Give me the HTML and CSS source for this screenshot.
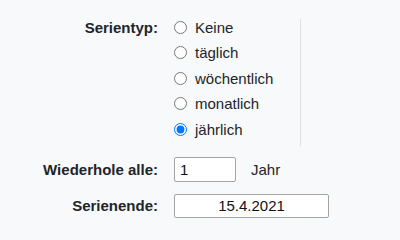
FILE: index.html
```html
<!DOCTYPE html>
<html lang="de">
<head>
<meta charset="utf-8">
<title>Serie</title>
<link rel="stylesheet" href="styles.css">
</head>
<body>
<form class="series">
  <div class="row row-type">
    <div class="label">Serientyp:</div>
    <div class="options">
      <label class="option"><input type="radio" name="typ" class="radio"><span>Keine</span></label>
      <label class="option"><input type="radio" name="typ" class="radio"><span>täglich</span></label>
      <label class="option"><input type="radio" name="typ" class="radio"><span>wöchentlich</span></label>
      <label class="option"><input type="radio" name="typ" class="radio"><span>monatlich</span></label>
      <label class="option"><input type="radio" name="typ" class="radio" checked><span>jährlich</span></label>
    </div>
  </div>
  <div class="row row-repeat">
    <div class="label">Wiederhole alle:</div>
    <div class="value">
      <input type="text" class="field field-small" value="1">
      <span class="unit">Jahr</span>
    </div>
  </div>
  <div class="row row-end">
    <div class="label">Serienende:</div>
    <div class="value">
      <input type="text" class="field field-date" value="15.4.2021">
    </div>
  </div>
</form>
</body>
</html>
```
FILE: styles.css
```css
html, body {
  margin: 0;
  padding: 0;
  background: #f8f9fa;
}
body {
  font-family: "Liberation Sans", Arial, sans-serif;
  font-size: 15px;
  color: #212529;
}
.series {
  display: flex;
  flex-direction: column;
  padding-top: 19px;
}
.row {
  display: grid;
  grid-template-columns: 158px auto;
  column-gap: 16px;
}
.label {
  text-align: right;
  font-weight: bold;
  line-height: 17px;
}
.row-type {
  align-items: start;
}
.options {
  display: flex;
  flex-direction: column;
  width: 126px;
  border-right: 1px solid #dee2e6;
}
.option {
  display: flex;
  align-items: center;
  height: 17px;
  padding-bottom: 8.4px;
  line-height: 17px;
}
.radio {
  margin: 0 8px 0 0;
  width: 13px;
  height: 13px;
  accent-color: #0075ff;
}
.row-repeat {
  margin-top: 11px;
  align-items: center;
}
.row-end {
  margin-top: 12px;
  align-items: center;
}
.value {
  display: flex;
  align-items: center;
}
.field {
  box-sizing: border-box;
  margin: 0;
  border: 1px solid #a4a4a4;
  border-radius: 2px;
  background: #fff;
  font-family: "Liberation Sans", Arial, sans-serif;
  font-size: 15px;
  color: #111;
  padding: 0 5px;
  outline: none;
}
.field-small {
  width: 62px;
  height: 25px;
}
.field-date {
  width: 155px;
  height: 24px;
  text-align: center;
}
.unit {
  margin-left: 15px;
}
```
